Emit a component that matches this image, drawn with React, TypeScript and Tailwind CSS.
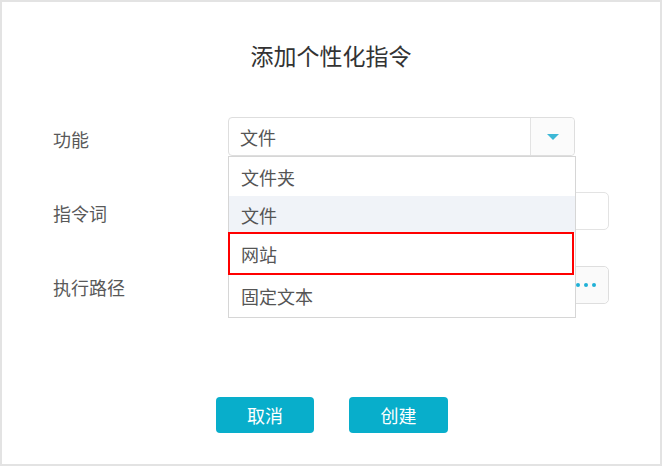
import React from "react";

const font = { fontFamily: '"Noto Sans CJK SC", "Noto Sans", sans-serif' };

export default function App() {
  return (
    <div className="w-[664px] h-[467px] bg-white" style={font}>
      <div className="w-[662px] h-[466px] border-2 border-[#e3e3e3] bg-white flex flex-col items-center">
        <div className="mt-[41px] h-[24px] leading-[24px] text-[23px] text-[#333333]">添加个性化指令</div>

        <div className="mt-[50px] w-full pl-[51px] flex flex-col gap-[36px]">
          {/* Row 1 */}
          <div className="flex items-center h-[39px]">
            <div className="w-[175px] text-[18px] leading-[20px] text-[#595959] pt-[4px]">功能</div>
            <div className="relative w-[347px]">
              <div className="flex h-[39px] border border-[#dedede] rounded-[4px] bg-white">
                <div className="flex-1 pl-[11px] flex items-center text-[18px] text-[#555555] leading-[20px]">文件</div>
                <div className="w-[44px] border-l border-[#e3e3e3] bg-[#fbfbfb] rounded-r-[4px] flex items-center justify-center">
                  <div className="w-0 h-0 border-l-[6px] border-r-[6px] border-t-[6px] border-l-transparent border-r-transparent border-t-[#3db8d6]" />
                </div>
              </div>
              <div className="absolute left-0 top-full w-[348px] z-10 border border-[#d6d6d6] bg-white text-[18px] leading-[20px] text-[#555555]">
                <div className="h-[39px] pl-[12px] flex items-center">文件夹</div>
                <div className="h-[37px] pl-[12px] flex items-center bg-[#f0f3f8]">文件</div>
                <div className="h-[42px] pl-[12px] flex items-center">网站</div>
                <div className="h-[42px] pl-[12px] flex items-center">固定文本</div>
                <div className="absolute left-[-1px] top-[75px] w-[346px] h-[43px] border-2 border-[#ff0000]" />
              </div>
            </div>
          </div>

          {/* Row 2 */}
          <div className="flex items-center h-[38px]">
            <div className="w-[175px] text-[18px] leading-[20px] text-[#595959] pt-[4px]">指令词</div>
            <div className="w-[381px] h-[38px] border border-[#e3e3e3] rounded-[5px] bg-white" />
          </div>

          {/* Row 3 */}
          <div className="flex items-center h-[38px]">
            <div className="w-[175px] text-[18px] leading-[20px] text-[#595959] pt-[4px]">执行路径</div>
            <div className="w-[381px] h-[38px] border border-[#dedede] rounded-[5px] bg-white flex">
              <div className="flex-1" />
              <div className="w-[45px] border-l border-[#dedede] bg-[#fafafa] rounded-r-[5px] flex items-center justify-center gap-[4px]">
                <span className="w-[4px] h-[4px] rounded-full bg-[#1fb0d6]" />
                <span className="w-[4px] h-[4px] rounded-full bg-[#1fb0d6]" />
                <span className="w-[4px] h-[4px] rounded-full bg-[#1fb0d6]" />
              </div>
            </div>
          </div>
        </div>

        <div className="mt-[93px] flex gap-[35px] ml-[2px]">
          <button className="w-[98px] h-[36px] rounded-[4px] bg-[#08aecb] text-white text-[18px] leading-[20px]">取消</button>
          <button className="w-[99px] h-[36px] rounded-[4px] bg-[#08aecb] text-white text-[18px] leading-[20px]">创建</button>
        </div>
      </div>
    </div>
  );
}
